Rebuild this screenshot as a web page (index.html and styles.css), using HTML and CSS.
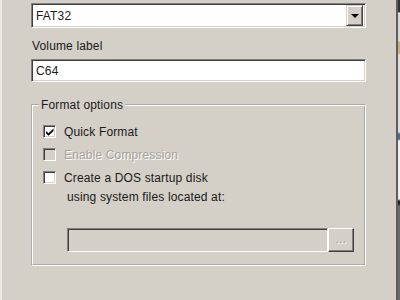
FILE: index.html
```html
<!DOCTYPE html>
<html lang="en">
  <head>
    <title>Format C64</title>
    <meta charset="utf-8" />
    <link rel="stylesheet" href="styles.css">
  </head>
<body>

<div class="screen">
  <div class="dialog">

    <div class="combo">
      <span class="combo-text">FAT32</span>
      <span class="combo-btn"><span class="arrow"></span></span>
    </div>

    <div class="label">Volume label</div>
    <div class="textbox">C64</div>

    <fieldset class="group">
      <legend>Format options</legend>

      <div class="row">
        <span class="check">
          <svg width="8" height="8" viewBox="0 0 8 8"><path d="M0 3 L2.5 5.2 L7.5 0.5 L7.5 3 L2.5 7.7 L0 5.5 Z" fill="#000"/></svg>
        </span>
        <span>Quick Format</span>
      </div>

      <div class="row disabled">
        <span class="check"></span>
        <span>Enable Compression</span>
      </div>

      <div class="row">
        <span class="check"></span>
        <span>Create a DOS startup disk</span>
      </div>

      <div class="sub">using system files located at:</div>

      <div class="path-row">
        <div class="path"></div>
        <div class="browse">...</div>
      </div>
    </fieldset>

  </div>
  <div class="edge"></div>
</div>

</body>
</html>
```

FILE: styles.css
```css
    html, body {
        margin: 0;
        padding: 0;
    }
    body {
        font-family: "Liberation Sans", Arial, sans-serif;
        font-size: 12px;
        line-height: 14px;
        letter-spacing: 0.15px;
        color: #1a1a1a;
        background: #d4d0c8;
    }
    .screen {
        display: flex;
        width: 400px;
        height: 300px;
        overflow: hidden;
    }
    .dialog {
        width: 396px;
        height: 300px;
        flex: none;
        box-sizing: border-box;
        padding: 3px 0 0 29px;
        border-left: 2px solid #ebe9e4;
        background: #d4d0c8;
    }
    .edge {
        width: 4px;
        flex: none;
        box-sizing: border-box;
        border-left: 2px solid #5e5e5e;
        background: linear-gradient(#333 0, #333 12px, #f4f4f4 13px, #d8d8d8 15px, #d8d8d8 41px, #c9b27a 42px, #c9b27a 53px, #e0e0e0 55px, #e0e0e0 132px, #4a6a90 134px, #4a6a90 139px, #eeeeee 141px, #eeeeee 199px, #222 201px, #222 204px, #6a6a6a 206px);
    }

    /* sunken fields */
    .combo, .textbox, .path {
        box-sizing: border-box;
        border: 1px solid;
        border-color: #808080 #fff #fff #808080;
        box-shadow: inset 1px 1px 0 #404040, inset -1px -1px 0 #d4d0c8;
    }
    .combo {
        display: flex;
        align-items: center;
        width: 335px;
        height: 25px;
        padding: 2px 2px 2px 4px;
        background: #fff;
    }
    .combo-text {
        flex: 1;
    }
    .combo-btn {
        display: flex;
        align-items: center;
        justify-content: center;
        width: 17px;
        height: 21px;
        box-sizing: border-box;
        background: #d4d0c8;
        border: 1px solid;
        border-color: #d4d0c8 #404040 #404040 #d4d0c8;
        box-shadow: inset 1px 1px 0 #fff, inset -1px -1px 0 #808080;
    }
    .arrow {
        width: 0;
        height: 0;
        border-left: 4px solid transparent;
        border-right: 4px solid transparent;
        border-top: 4px solid #000;
    }
    .label {
        margin-top: 11px;
        margin-left: 1px;
    }
    .textbox {
        width: 335px;
        height: 23px;
        margin-top: 6px;
        padding: 4px 4px;
        background: #fff;
    }

    /* group box */
    .group {
        width: 335px;
        box-sizing: border-box;
        margin: 16px 0 0 0;
        padding: 8px 10px 12px 10px;
        border: 2px groove #fff;
    }
    .group legend {
        padding: 0 2px;
        margin-left: -4px;
    }
    .row {
        display: flex;
        align-items: center;
        gap: 8px;
        height: 23px;
    }
    .check {
        display: flex;
        align-items: center;
        justify-content: center;
        width: 13px;
        height: 13px;
        box-sizing: border-box;
        background: #fff;
        border: 1px solid;
        border-color: #808080 #fff #fff #808080;
        box-shadow: inset 1px 1px 0 #404040, inset -1px -1px 0 #d4d0c8;
    }
    .disabled {
        color: #a6a39c;
        text-shadow: 1px 1px 0 #fff;
    }
    .disabled .check {
        background: #d4d0c8;
    }
    .sub {
        margin-top: 1px;
        padding-left: 24px;
    }
    .path-row {
        display: flex;
        margin-top: 24px;
        margin-left: 24px;
    }
    .path {
        width: 261px;
        height: 24px;
        background: #d4d0c8;
    }
    .browse {
        width: 26px;
        height: 24px;
        box-sizing: border-box;
        text-align: center;
        line-height: 20px;
        color: #a6a39c;
        text-shadow: 1px 1px 0 #fff;
        border: 1px solid;
        border-color: #fff #404040 #404040 #fff;
        box-shadow: inset -1px -1px 0 #808080;
    }
```
